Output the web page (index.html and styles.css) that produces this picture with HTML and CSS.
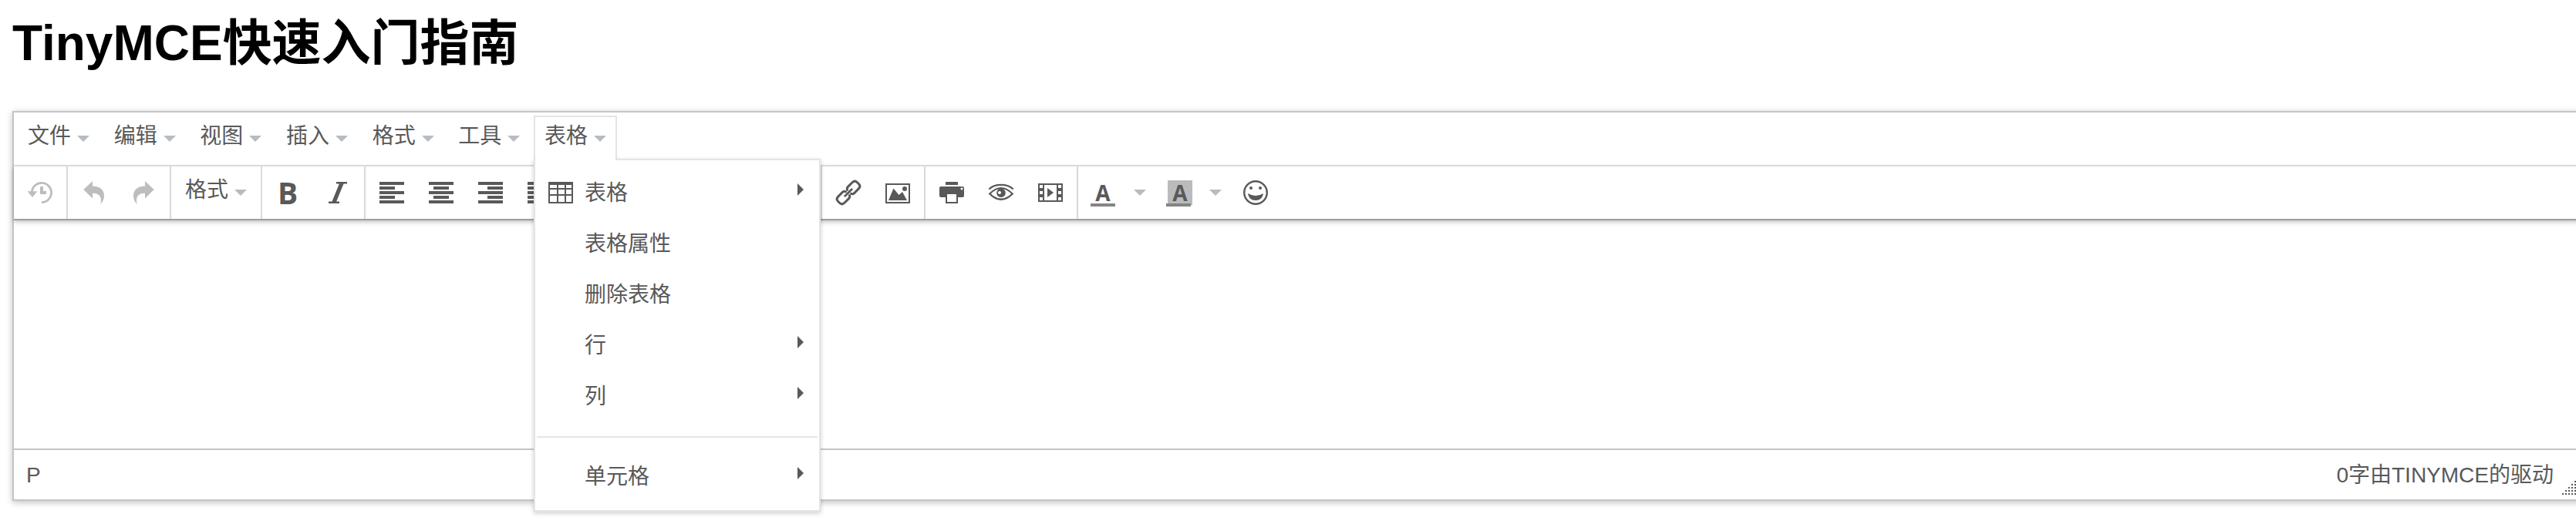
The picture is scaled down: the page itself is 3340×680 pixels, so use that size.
FILE: index.html
```html
<!DOCTYPE html>
<html lang="zh-CN">
<head>
    <meta charset="UTF-8">
    <meta name="viewport" content="width=device-width, initial-scale=1.0">
    <title>TinyMCE快速入门指南</title>
    <link rel="stylesheet" href="styles.css">
</head>
<body>
    <h1>TinyMCE快速入门指南</h1>

    <div class="editor">
        <div class="menubar">
            <div class="menu-btn">文件<i class="caret"></i></div>
            <div class="menu-btn">编辑<i class="caret"></i></div>
            <div class="menu-btn">视图<i class="caret"></i></div>
            <div class="menu-btn">插入<i class="caret"></i></div>
            <div class="menu-btn">格式<i class="caret"></i></div>
            <div class="menu-btn">工具<i class="caret"></i></div>
            <div class="menu-btn active">表格<i class="caret"></i>
                <div class="menu">
                    <div class="menu-item">
                        <svg class="icon" viewBox="0 0 32 32"><path fill-rule="evenodd" d="M0 2h32v28H0zM2 6v4h9V6zM13 6v4h8V6zM23 6v4h7V6zM2 12v6h9v-6zM13 12v6h8v-6zM23 12v6h7v-6zM2 20v8h9v-8zM13 20v8h8v-8zM23 20v8h7v-8z"/></svg>
                        <span>表格</span><i class="arrow"></i>
                    </div>
                    <div class="menu-item"><span>表格属性</span></div>
                    <div class="menu-item"><span>删除表格</span></div>
                    <div class="menu-item"><span>行</span><i class="arrow"></i></div>
                    <div class="menu-item"><span>列</span><i class="arrow"></i></div>
                    <div class="menu-sep"></div>
                    <div class="menu-item"><span>单元格</span><i class="arrow"></i></div>
                </div>
            </div>
        </div>

        <div class="toolbar">
            <div class="group disabled">
                <svg class="icon" viewBox="0 0 32 32"><path d="M5.4 15A12.6 12.6 0 1 1 18 28.6" fill="none" stroke="currentColor" stroke-width="2.8"/><path d="M-.4 14.2h12.8L6 22zM16 8h4v6h4v4h-8z"/></svg>
            </div>
            <div class="group disabled">
                <svg class="icon" viewBox="0 0 32 32"><path d="M14 1v6.6C24 7.6 29.4 13 29 21c-.3 4-2 7-4.7 10C26.5 22 23 16.3 14 16.7v6.8L2.3 12z"/></svg>
                <svg class="icon" viewBox="0 0 32 32"><path d="M18 1v6.6C8 7.6 2.6 13 3 21c.3 4 2 7 4.7 10C5.5 22 9 16.3 18 16.7v6.8L29.7 12z"/></svg>
            </div>
            <div class="group format">格式<i class="caret"></i></div>
            <div class="group">
                <b class="icon bold">B</b>
                <svg class="icon" viewBox="0 0 32 32"><path d="M14 3.2h14M4 28.800h14" fill="none" stroke="currentColor" stroke-width="2.400"/><path d="M21.300 3L10.700 29" fill="none" stroke="currentColor" stroke-width="5.200"/></svg>
            </div>
            <div class="group">
                <svg class="icon" viewBox="0 0 32 32"><path d="M0 2h32v4H0zM0 8h20v4H0zM0 14h32v4H0zM0 20h20v4H0zM0 26h32v4H0z"/></svg>
                <svg class="icon" viewBox="0 0 32 32"><path d="M0 2h32v4H0zM6 8h20v4H6zM0 14h32v4H0zM6 20h20v4H6zM0 26h32v4H0z"/></svg>
                <svg class="icon" viewBox="0 0 32 32"><path d="M0 2h32v4H0zM12 8h20v4H12zM0 14h32v4H0zM12 20h20v4H12zM0 26h32v4H0z"/></svg>
                <svg class="icon" viewBox="0 0 32 32"><path d="M0 2h32v4H0zM0 8h32v4H0zM0 14h32v4H0zM0 20h32v4H0zM0 26h32v4H0z"/></svg>
            </div>
            <div class="group lists">
                <svg class="icon" viewBox="0 0 32 32"><path d="M0 2h6v6H0zM12 3h20v4H12zM0 13h6v6H0zM12 14h20v4H12zM0 24h6v6H0zM12 25h20v4H12z"/></svg>
                <svg class="icon" viewBox="0 0 32 32"><path d="M2 2h3v6H2zM12 3h20v4H12zM2 13h3v6H2zM12 14h20v4H12zM2 24h3v6H2zM12 25h20v4H12z"/></svg>
                <svg class="icon" viewBox="0 0 32 32"><path d="M0 2h32v4H0zM12 8h20v4H12zM12 14h20v4H12zM12 20h20v4H12zM0 26h32v4H0zM8 10v12l-8-6z"/></svg>
                <svg class="icon" viewBox="0 0 32 32"><path d="M0 2h32v4H0zM12 8h20v4H12zM12 14h20v4H12zM12 20h20v4H12zM0 26h32v4H0zM0 10v12l8-6z"/></svg>
            </div>
            <div class="group">
                <svg class="icon" viewBox="0 0 32 32">
                    <g fill="none" stroke="currentColor" stroke-width="3" stroke-linecap="round" transform="rotate(-45 16 16)">
                        <path d="M10 16h12" stroke-width="2.8"/>
                        <path d="M14.5 19.5q-1 2.3-3.5 2.3H3q-4.500 0-4.500-4.500v-2.600q0-4.500 4.500-4.500h8q2.500 0 3.500 2.300"/>
                        <path d="M17.500 12.500q1-2.300 3.500-2.300h8q4.500 0 4.500 4.500v2.600q0 4.500-4.500 4.500h-8q-2.500 0-3.500-2.300"/>
                    </g>
                </svg>
                <svg class="icon" viewBox="0 0 32 32"><path fill-rule="evenodd" d="M0 4h32v26H0zM2 6v22h28V6z"/><path d="M4 26l6.500-15.500 7 8.500 4.500-4 6 11z"/><circle cx="25" cy="11" r="3"/></svg>
            </div>
            <div class="group">
                <svg class="icon" viewBox="0 0 32 32"><path fill-rule="evenodd" d="M8 2h16v4H8zM2 8h28q2 0 2 2v10q0 2-2 2h-6v8H8v-8H2q-2 0-2-2V10q0-2 2-2zM10 18v10h12V18zM29 9.500a1.500 1.500 0 1 0 .01 0z"/></svg>
                <svg class="icon" viewBox="0 0 32 32"><path d="M.3 11.500C8 4 24 4 31.700 11.500M1.200 17.500Q16 2.500 30.800 17.500Q16 32 1.200 17.500z" fill="none" stroke="currentColor" stroke-width="2.200"/><path fill-rule="evenodd" d="M16 10.500a5.800 5.800 0 1 0 .01 0zM14 14a2 2 0 1 1-.01 0z"/></svg>
                <svg class="icon" viewBox="0 0 32 32"><path fill-rule="evenodd" d="M0 4h32v24H0zM2 6v4h4V6zM2 14v4h4v-4zM2 22v4h4v-4zM26 6v4h4V6zM26 14v4h4v-4zM26 22v4h4v-4zM8 6v20h16V6z"/><path d="M12 10v12l8-6z"/></svg>
            </div>
            <div class="group colors">
                <span class="icon color">A</span><i class="caret"></i>
                <span class="icon color back">A</span><i class="caret"></i>
                <svg class="icon" viewBox="0 0 32 32"><circle cx="16" cy="16" r="14.800" fill="none" stroke="currentColor" stroke-width="2.400"/><circle cx="10" cy="10" r="2"/><circle cx="22" cy="10" r="2"/><path d="M6 17q10 6 20 0q-1.500 9-10 9T6 17z"/></svg>
            </div>
        </div>

        <div class="edit-area"></div>

        <div class="statusbar">
            <span>P</span>
            <span class="wordcount">0字由TINYMCE的驱动</span>
            <svg class="resize" viewBox="0 0 20 20"><path d="M16 0h2v2h-2zM12 4h2v2h-2zM16 4h2v2h-2zM8 8h2v2H8zM12 8h2v2h-2zM16 8h2v2h-2zM4 12h2v2H4zM8 12h2v2H8zM12 12h2v2h-2zM16 12h2v2h-2zM0 16h2v2H0zM4 16h2v2H4zM8 16h2v2H8zM12 16h2v2h-2zM16 16h2v2h-2z"/></svg>
        </div>
    </div>
</body>
</html>
```
FILE: styles.css
```css
* {
    margin: 0;
    padding: 0;
    box-sizing: border-box;
}

html {
    overflow: hidden;
}

body {
    font-family: "Liberation Sans", "Noto Sans CJK SC", sans-serif;
    background-color: #fff;
    min-height: 100vh;
    padding: 8px 0 0 16px;
}

h1 {
    font-size: 64px;
    line-height: 96px;
    height: 136px;
    color: #000;
}

.editor {
    width: 3330px;
    height: 506px;
    border: 2px solid #c5c5c5;
    box-shadow: 0 2px 8px rgba(0, 0, 0, 0.25);
    font-size: 28px;
    line-height: 40px;
    color: #595959;
    display: flex;
    flex-direction: column;
}

.menubar {
    display: flex;
    gap: 3.67px;
    height: 70px;
    padding: 4px 4px 0;
    border-bottom: 2px solid #e2e4e7;
}

.menu-btn {
    position: relative;
    display: flex;
    width: 108px;
    height: 56px;
    padding: 5px 12px 0;
    border: 2px solid transparent;
    border-bottom: none;
}

.menu-btn.active {
    border-color: #e2e4e7;
    background-color: #fff;
}

.caret {
    margin: 19px 0 0 8px;
    border: 8px solid transparent;
    border-top-color: #b5bcc2;
    border-bottom: none;
    height: 8px;
}

.menu {
    position: absolute;
    left: -2px;
    top: 54px;
    z-index: 10;
    width: 372px;
    height: 458px;
    padding: 8px 2px;
    background-color: #fff;
    border: 2px solid #e2e4e7;
    box-shadow: 0 2px 6px rgba(0, 0, 0, 0.2);
}

/* opens the top border under the active tab */
.menu::before {
    content: "";
    position: absolute;
    left: 0;
    top: -4px;
    width: 104px;
    height: 4px;
    background-color: #fff;
}

.menu-item {
    display: flex;
    height: 66px;
    padding: 15px 18px 0 14px;
}

.menu-item span {
    flex: 1;
    margin-left: 48px;
}

.menu-item .icon {
    margin: 3px 0 0 1px;
}

.menu-item .icon + span {
    margin-left: 15px;
}

.arrow {
    height: 16px;
    margin-top: 7px;
    border: 8px solid transparent;
    border-left-color: #595959;
    border-right: none;
}

.menu-sep {
    height: 2px;
    margin: 20px 0 16px;
    background-color: #e5e5e5;
}

.toolbar {
    display: flex;
    height: 70px;
    border-bottom: 2px solid #9e9e9e;
    box-shadow: 0 2px 6px rgba(0, 0, 0, 0.25);
}

.group {
    display: flex;
    gap: 32px;
    padding: 18px 18px 0;
    border-right: 2px solid #d9d9d9;
}

.group:last-child {
    border-right: none;
}

.disabled {
    color: #bdbdbd;
}

.format {
    gap: 0;
    padding-top: 11px;
}

.lists {
    width: 330px;
}

.icon {
    display: block;
    flex: none;
    width: 32px;
    height: 32px;
    fill: currentColor;
    overflow: visible;
    text-align: center;
    line-height: 32px;
}

.bold {
    font-family: "Open Sans", sans-serif;
    font-size: 39px;
    font-weight: bold;
    text-indent: -2px;
}

.colors {
    gap: 0;
    padding-left: 16px;
}

.colors .caret {
    margin: 12px 26px 0 24px;
}

.colors .back + .caret {
    margin: 12px 28px 0 22px;
}

.color {
    position: relative;
    font-family: "Open Sans", sans-serif;
    font-size: 28px;
    font-weight: bold;
}

.color::after {
    content: "";
    position: absolute;
    left: 0;
    top: 30px;
    width: 32px;
    height: 4px;
    background-color: #858585;
}

.back {
    background-color: #bbb;
    margin-left: 2px;
}

.back::after {
    left: -2px;
}

.edit-area {
    flex: 1;
}

.statusbar {
    display: flex;
    height: 66px;
    border-top: 2px solid #c5c5c5;
    padding-left: 16px;
    line-height: 65px;
}

.wordcount {
    margin-left: auto;
}

.resize {
    width: 20px;
    height: 20px;
    margin: 40px 2px 0 11px;
    fill: #595959;
}
```
